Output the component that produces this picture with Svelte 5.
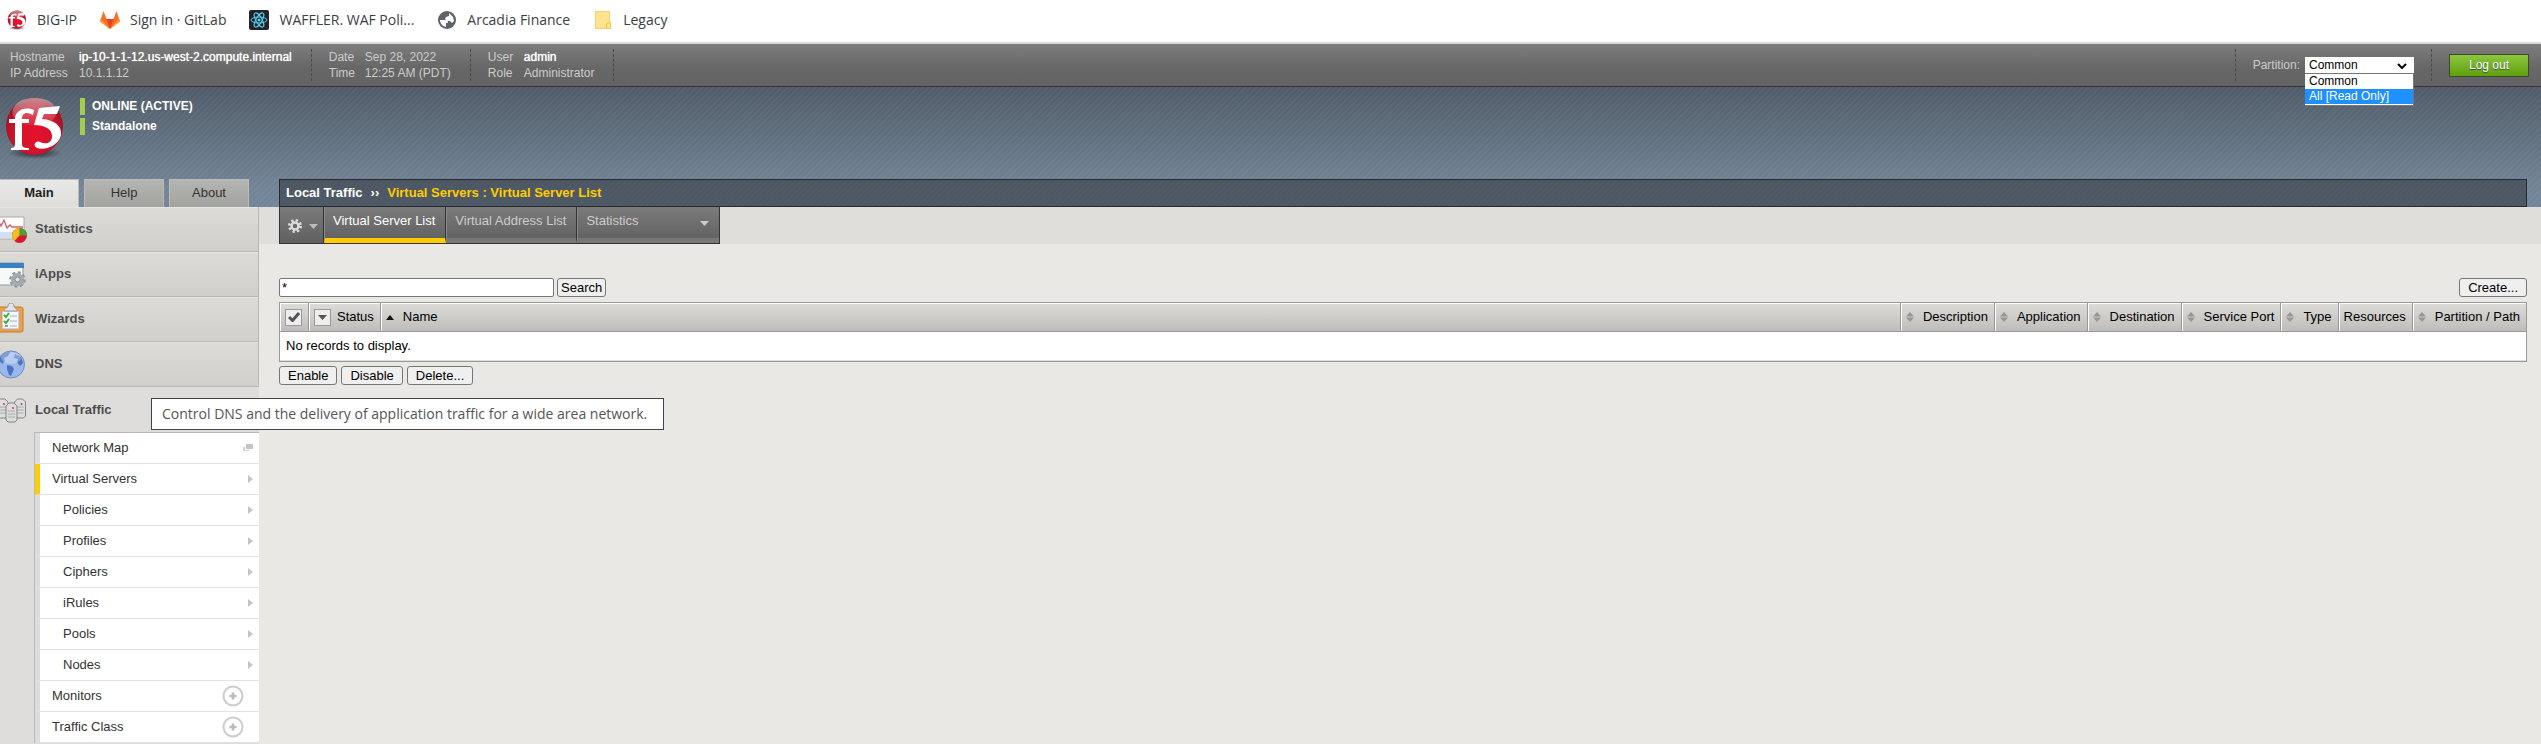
<script lang="ts">
  const menu = ['Statistics', 'iApps', 'Wizards', 'DNS', 'Local Traffic'];
  const links = [
    { label: 'Network Map', icon: 'window' },
    { label: 'Virtual Servers', icon: 'arrow', active: true },
    { label: 'Policies', icon: 'arrow', sub: true },
    { label: 'Profiles', icon: 'arrow', sub: true },
    { label: 'Ciphers', icon: 'arrow', sub: true },
    { label: 'iRules', icon: 'arrow', sub: true },
    { label: 'Pools', icon: 'arrow', sub: true },
    { label: 'Nodes', icon: 'arrow', sub: true },
    { label: 'Monitors', icon: 'plus' },
    { label: 'Traffic Class', icon: 'plus' }
  ];
  const columns = ['Description', 'Application', 'Destination', 'Service Port', 'Type', 'Resources', 'Partition / Path'];
  const options = ['Common', 'All [Read Only]'];
  let partition = $state('Common');
  let query = $state('*');
</script>

{#snippet ball(size: number, id: string)}
  <svg width={size} height={size} viewBox="0 0 62 62" aria-hidden="true">
    <defs>
      <radialGradient id={id} cx="50%" cy="60%" r="60%">
        <stop offset="0" stop-color="#e8102c" />
        <stop offset="0.6" stop-color="#d0142c" />
        <stop offset="1" stop-color="#8e1420" />
      </radialGradient>
      <radialGradient id={id + 'e'}>
        <stop offset="0" stop-color="#14181c" stop-opacity=".8" />
        <stop offset="1" stop-color="#14181c" stop-opacity="0" />
      </radialGradient>
      <linearGradient id={id + 's'} x1="0" y1="0" x2="0" y2="1">
        <stop offset="0" stop-color="#fff" stop-opacity=".5" />
        <stop offset="1" stop-color="#fff" stop-opacity="0.05" />
      </linearGradient>
    </defs>
    <ellipse cx="31" cy="56" rx="27" ry="6" fill="url(#{id + 'e'})" />
    <circle cx="30.500" cy="29.500" r="28.500" fill="url(#{id})" />
    <ellipse cx="30.500" cy="15" rx="22" ry="14" fill="url(#{id + 's'})" />
    <path d="M30 13c-10-4-19 1-19 9H5v4h6v20c0 4-1 5-4 5v2h18v-2c-6 0-7-1-7-5V26h7v-4h-7c0-6 4-8 11-4z" fill="#fff" />
    <path d="M35 11l21-2-3 8H40l-2 5c13 1 20 7 19 16-2 10-15 16-24 13-5-3-1-8 3-6 6 3 12 1 12-6 0-7-7-11-18-11z" fill="#fff" />
  </svg>
{/snippet}

<div class="page">
  <nav class="bookmarks" aria-label="Bookmarks">
    <a href="#bigip">{@render ball(20, 'b1')}BIG-IP</a>
    <a href="#gitlab">
      <svg width="20" height="20" viewBox="0 0 20 20" aria-hidden="true">
        <path d="M10 19L0 11.500 3.500 1l3 8h7l3-8L20 11.500z" fill="#fc6d26" />
        <path d="M10 19L6.500 9h7z" fill="#e24329" />
        <path d="M0 11.500L1 9l9 10zM20 11.500L19 9l-9 10z" fill="#fca326" />
      </svg>Sign in · GitLab</a>
    <a href="#waffler">
      <svg width="20" height="20" viewBox="0 0 20 20" aria-hidden="true">
        <rect width="20" height="20" rx="2" fill="#20232a" />
        <g fill="none" stroke="#5ccfee" stroke-width="1">
          <ellipse cx="10" cy="10" rx="8" ry="3" />
          <ellipse cx="10" cy="10" rx="8" ry="3" transform="rotate(60 10 10)" />
          <ellipse cx="10" cy="10" rx="8" ry="3" transform="rotate(120 10 10)" />
        </g>
        <circle cx="10" cy="10" r="1.500" fill="#5ccfee" />
      </svg>WAFFLER. WAF Poli...</a>
    <a href="#arcadia">
      <svg width="20" height="20" viewBox="0 0 20 20" aria-hidden="true">
        <circle cx="10" cy="10" r="9" fill="#5f6368" />
        <path d="M3 10l5 0c2 0 3 1 3 3h-2v4c-4-1-6-4-6-7zM12 3l4 4 1 4-2 2-2-2h-3l-2-2 1-2 3-1z" fill="#fff" />
      </svg>Arcadia Finance</a>
    <a href="#legacy">
      <svg width="20" height="20" viewBox="0 0 20 20" aria-hidden="true">
        <path d="M2.500 1.500h14v17h-14z" fill="#ffe38f" stroke="#f5d169" />
        <path d="M13.500 18.500v-5l4-1v6z" fill="#ffe38f" stroke="#efc84e" />
      </svg>Legacy</a>
  </nav>

  <header class="status">
    <dl>
      <div><dt>Hostname</dt><dd class="strong">ip-10-1-1-12.us-west-2.compute.internal</dd></div>
      <div><dt>IP Address</dt><dd>10.1.1.12</dd></div>
    </dl>
    <dl class="narrow">
      <div><dt>Date</dt><dd>Sep 28, 2022</dd></div>
      <div><dt>Time</dt><dd>12:25 AM (PDT)</dd></div>
    </dl>
    <dl class="narrow">
      <div><dt>User</dt><dd class="strong">admin</dd></div>
      <div><dt>Role</dt><dd>Administrator</dd></div>
    </dl>
    <div class="partition">
      <label for="partition">Partition:</label>
      <div class="picker">
        <select id="partition" bind:value={partition}>
          {#each options as o}<option>{o}</option>{/each}
        </select>
        <svg class="chev" width="10" height="6" viewBox="0 0 10 6" aria-hidden="true"><path d="M1 1l4 4 4-4" fill="none" stroke="#000" stroke-width="2" /></svg>
        <ul class="options">
          {#each options as o, i}<li class:hot={i === 1}>{o}</li>{/each}
        </ul>
      </div>
    </div>
    <div class="logout"><button>Log out</button></div>
  </header>

  <div class="banner">
    <div class="brand">
      <span class="logo">{@render ball(62, 'b2')}</span>
      <div class="state"><span>ONLINE (ACTIVE)</span><span>Standalone</span></div>
    </div>
    <div class="heads">
      <div class="tabs">
        <button class="on">Main</button><button>Help</button><button>About</button>
      </div>
      <h1><span>Local Traffic</span><span>››</span><em>Virtual Servers : Virtual Server List</em></h1>
    </div>
  </div>

  <div class="body">
    <aside>
      {#each menu as m, i}
        <a class="item" class:open={i === 4} href="#{m}">
          <svg width="28" height="32" viewBox="0 0 28 32" aria-hidden="true">
            {#if i === 0}
              <path d="M-2 4h26v22H-2z" fill="#fdfdfd" stroke="#aaa" />
              <path d="M-1 19h24v6H-1z" fill="#cfe0ee" />
              <path d="M-1 9l2 4 3-6 3 8 3-3 2 2h11" fill="none" stroke="#d4606a" stroke-width="1.300" />
              <circle cx="19.500" cy="22.500" r="7.500" fill="#d8172f" />
              <path d="M19.500 22.500V15a7.500 7.500 0 0 1 7.500 7.500z" fill="#3fa535" />
              <path d="M19.500 22.500V15a7.500 7.500 0 0 0-5 13z" fill="#f4bd1e" />
            {:else if i === 1}
              <path d="M-2 5h25v22H-2z" fill="#f7f8f9" stroke="#8c99a5" />
              <path d="M-2 5h26v5H-2z" fill="#3b82c4" />
              <circle cx="17.500" cy="21.500" r="7" fill="none" stroke="#8f999b" stroke-width="2.500" stroke-dasharray="3 2.500" />
              <circle cx="17.500" cy="21.500" r="4.500" fill="#d3d6d7" stroke="#a3abad" stroke-width="4" />
              <circle cx="17.500" cy="21.500" r="2.500" fill="#dfe1e1" stroke="#848d90" />
            {:else if i === 2}
              <rect x="-3" y="4" width="26" height="25" rx="2" fill="#f0a040" stroke="#c97a20" />
              <path d="M2 8h17v18H2z" fill="#f3f6fc" stroke="#a9a9b5" />
              <path d="M4 8c0-4 4-2 4-5 0-4 6-4 6 0 0 3 3 1 3 5z" fill="#e2e3e5" stroke="#999" />
              <path d="M10 13h7M10 18h7M10 23h7" stroke="#a6b2d4" />
              <path d="M4 12l2 2 3-4M4 18l2 2 3-4" fill="none" stroke="#3fae2a" stroke-width="2" />
              <path d="M5 23h3" stroke="#999" stroke-width="2" />
            {:else if i === 3}
              <circle cx="11" cy="16.500" r="13.500" fill="#9ab8ee" stroke="#6e8cc0" />
              <path d="M-1 12c2-5 6-8 11-8l-2 4-4 2 1 3-3 3zM7 17l5 1 2 3-3 7-2-1-2-6zM15 6l6 3 2 6-3 3-3-4 1-3-4-1z" fill="#4a74bc" />
              <ellipse cx="11" cy="10" rx="10" ry="6" fill="#fff" opacity=".3" />
            {:else}
              {#each [[-3, 5], [14.500, 5], [6, 9]] as [x, y]}
                <path d="M{x} {y + 3}l3-3h5l3 3v14l-2 2h-7l-2-2z" fill="#dcdddd" stroke="#858585" />
                <path d="M{x + 2} {y + 8}h7M{x + 2} {y + 11}h7M{x + 2} {y + 14}h7" stroke="#aaa" />
                <circle cx={x + 7} cy={y + 5} r="1" fill="#e0344a" />
              {/each}
            {/if}
          </svg>{m}</a>
      {/each}
      <ul class="links">
        {#each links as l}
          <li class:active={l.active} class:sub={l.sub}>
            <a href="#{l.label}">{l.label}</a>
            {#if l.icon === 'arrow'}
              <svg width="5" height="10" viewBox="0 0 5 10" aria-hidden="true"><path d="M0 1l5 4-5 4z" fill="#c4c4c4" /></svg>
            {:else if l.icon === 'window'}
              <svg width="10" height="8" viewBox="0 0 10 8" aria-hidden="true"><path d="M0 3h2v3h4v1H0z" fill="#d0d0d0" /><path d="M3 0h7v5H3z" fill="#c4c4c4" /></svg>
            {:else}
              <button class="add" aria-label="Create {l.label}">
                <svg width="22" height="22" viewBox="0 0 22 22" aria-hidden="true"><circle cx="11" cy="11" r="9.500" fill="none" stroke="#ccc" stroke-width="2" /><path d="M11 7.500v7M7.500 11h7" stroke="#bbb" stroke-width="2.500" /></svg>
              </button>
            {/if}
          </li>
        {/each}
      </ul>
      <div class="tooltip" role="tooltip">Control DNS and the delivery of application traffic for a wide area network.</div>
    </aside>

    <main>
      <div class="toolbar">
        <div class="tools">
          <button class="gear" aria-label="Preferences">
            <svg width="14" height="14" viewBox="0 0 14 14" aria-hidden="true"><circle cx="7" cy="7" r="5.500" fill="none" stroke="#ddd" stroke-width="3" stroke-dasharray="2.200 2.120" /><circle cx="7" cy="7" r="3.500" fill="none" stroke="#ddd" stroke-width="2.500" /></svg>
            <svg width="9" height="5" viewBox="0 0 9 5" aria-hidden="true"><path d="M0 0h9L4.500 5z" fill="#bbb" /></svg>
          </button>
          <button class="current">Virtual Server List</button>
          <button>Virtual Address List</button>
          <button class="stats">Statistics<svg width="9" height="5" viewBox="0 0 9 5" aria-hidden="true"><path d="M0 0h9L4.500 5z" fill="#ccc" /></svg></button>
        </div>
      </div>

      <div class="content">
        <div class="search">
          <input type="text" aria-label="Search" bind:value={query} />
          <button class="btn tight">Search</button>
          <button class="btn create">Create...</button>
        </div>
        <table>
          <thead>
            <tr>
              <th class="check"><span class="box"><svg width="12" height="10" viewBox="0 0 12 10" aria-hidden="true"><path d="M1 5l3.500 3.500L11 1" fill="none" stroke="#555" stroke-width="3" /></svg></span></th>
              <th class="st"><div><span class="box"><svg width="9" height="5" viewBox="0 0 9 5" aria-hidden="true"><path d="M0 0h9L4.500 5z" fill="#555" /></svg></span>Status</div></th>
              <th class="name"><div><svg width="8" height="5" viewBox="0 0 8 5" aria-hidden="true"><path d="M0 5h8L4 0z" fill="#111" /></svg>Name</div></th>
              {#each columns as c}
                <th class="col"><div>{#if c !== 'Resources'}<svg width="8" height="10" viewBox="0 0 8 10" aria-hidden="true"><path d="M0 4.500h8L4 0zM0 5.500h8L4 10z" fill="#969696" /></svg>{/if}{c}</div></th>
              {/each}
            </tr>
          </thead>
          <tbody><tr><td colspan="10">No records to display.</td></tr></tbody>
        </table>
        <div class="actions">
          <button class="btn">Enable</button><button class="btn">Disable</button><button class="btn">Delete...</button>
        </div>
      </div>
    </main>
  </div>
</div>

<style>
  :global(body) { background: #e9e8e4; overflow: hidden; }
  .page { font: 13px/16px "Liberation Sans", Arial, sans-serif; color: #000; height: 100vh; display: flex; flex-direction: column; overflow: hidden; }
  .page :global(svg) { display: block; flex: none; }
  button, input, select { font: inherit; }
  button { cursor: pointer; }
  a { color: inherit; text-decoration: none; }
  ul, dl, dd, h1 { margin: 0; padding: 0; list-style: none; }

  .bookmarks { display: flex; gap: 23px; height: 40px; flex: none; align-items: center; padding: 0 7px 2px; background: #fff; border-bottom: 2px solid #d9dadc; font: 14px/20px "Open Sans", "Noto Sans", sans-serif; color: #3c4043; }
  .bookmarks a { display: flex; gap: 10px; align-items: center; }

  .status { display: flex; height: 42px; flex: none; background: linear-gradient(#7d7d7d, #666 60%, #646464); border-bottom: 1px solid #333; font-size: 12px; color: #ccc; align-items: center; }
  .status dl { display: flex; flex-direction: column; height: 32px; padding: 0 19px 0 10px; border-right: 1px dashed #484848; }
  .status dl div { display: flex; line-height: 16px; }
  .status dt { width: 69px; }
  .status dl.narrow { padding-left: 17px; }
  .status .narrow dt { width: 36px; }
  .strong { color: #fff; text-shadow: 0 0 1px #fff; }
  .partition { display: flex; align-items: center; gap: 5px; margin-left: auto; padding: 0 17px; height: 32px; border: dashed #484848; border-width: 0 1px; }
  .picker { position: relative; }
  select { display: block; width: 109px; height: 17px; border: 0; border-radius: 0; background: #fff; color: #000; padding: 0 4px; appearance: none; line-height: 16px; }
  .chev { position: absolute; right: 7px; top: 6px; }
  .options { position: absolute; top: 16px; left: 0; right: 0; z-index: 5; background: #fff; color: #000; border: 1px solid #767676; border-left: 0; padding-bottom: 1px; }
  .options li { line-height: 15px; padding: 0 4px; }
  .options .hot { background: #1e90ff; color: #fff; }
  .logout { padding: 0 12px 0 17px; }
  .logout button { width: 80px; height: 23px; border: 1px solid #3d4a2c; background: linear-gradient(#8cc63e, #5fa00c); color: #fff; padding: 0; font-size: 12px; text-shadow: 0 1px 1px #345; }

  .banner { height: 120px; flex: none; display: flex; flex-direction: column; justify-content: space-between; background: repeating-linear-gradient(135deg, rgba(255,255,255,.04) 0 2px, transparent 2px 4px), linear-gradient(#4f5b68, #728496 85%, #72849a); }
  .brand { display: flex; padding: 10px 0 0 4px; gap: 14px; }
  .state { display: flex; flex-direction: column; gap: 3px; font: bold 12px/17px "Liberation Sans", Arial, sans-serif; color: #fff; padding-top: 1px; }
  .state span { border-left: 5px solid #a2cd52; padding-left: 7px; }
  .heads { display: flex; align-items: flex-end; }
  .tabs { display: flex; gap: 5px; width: 279px; flex: none; }
  .tabs button { width: 80px; height: 28px; border: 1px solid #bbb; border-bottom: 0; background: linear-gradient(#b4b4b2, #a2a29e); padding: 0 0 2px; color: #333; }
  .tabs .on { width: 79px; border-left: 0; background: linear-gradient(#e8e8e8, #deddd9); font-weight: bold; color: #222; }
  h1 { flex: 1; display: flex; gap: 8px; margin-right: 14px; height: 26px; border: 1px solid #26292d; background: rgba(40, 44, 50, .5); padding-left: 6px; font-size: 13px; line-height: 26px; color: #fff; }
  h1 em { font-style: normal; color: #fc0; }

  .body { display: flex; flex: 1; min-height: 0; }
  aside { position: relative; width: 259px; flex: none; background: #dedddb; }
  .item { display: flex; align-items: center; gap: 7px; height: 44px; border-bottom: 1px solid #b9b9b7; border-right: 1px solid #b9b9b7; background: linear-gradient(#dcdbd8, #d0cfcc); box-shadow: inset 0 1px #e5e4e1; color: #4d4d4d; font-weight: bold; }
  .item.open { border: 0; background: none; box-shadow: none; height: 45px; }
  .links { margin-left: 34px; border: solid #b9b9b9; border-width: 1px 0 0 1px; background: #fff; }
  li { box-sizing: border-box; }
  .links li { display: flex; justify-content: space-between; align-items: center; height: 31px; border-left: 5px solid #dcdcdc; border-bottom: 1px solid #e2e2e2; padding: 0 6px 0 12px; color: #333; }
  .links .sub { padding-left: 23px; }
  .links .active { border-left-color: #fc0; }
  .add { border: 0; padding: 0; background: none; margin-right: 9px; }
  .tooltip { position: absolute; left: 151px; top: 191px; z-index: 9; box-sizing: border-box; height: 32px; padding: 0 16px 0 10px; border: 1px solid #444; background: #fff; color: #555; font: 14px/30px "Open Sans", "Noto Sans", sans-serif; white-space: nowrap; }

  main { flex: 1; min-width: 0; }
  .toolbar { padding-left: 20px; background: #dfdedb; }
  .tools { display: flex; width: max-content; height: 37px; background: linear-gradient(#7b7b7b, #5f5f5f); box-sizing: border-box; border: 1px solid #333; border-top: 0; }
  .tools button { display: flex; box-sizing: border-box; border: 0; border-left: 1px solid #8a8a8a; border-right: 1px solid #333; border-bottom: 5px solid #777; background: none; color: #ccc; padding: 6px 10px 0 8px; line-height: 16px; }
  .tools .gear { align-items: center; gap: 7px; padding: 2px 5px 0 8px; border-left: 0; border-bottom: 0; }
  .tools .current { color: #fff; border-bottom-color: #fc0; }
  .tools .stats { width: 142px; justify-content: space-between; border-right: 0; }
  .stats svg { margin-top: 8px; }
  .content { padding: 34px 14px 0 20px; }
  .search { display: flex; gap: 3px; margin-bottom: 5px; }
  .search input { box-sizing: border-box; width: 275px; height: 19px; border: 1px solid #767676; border-radius: 2px; padding: 0 2px; }
  .btn { box-sizing: border-box; height: 19px; border: 1px solid #767676; border-radius: 3px; background: #efefef; color: #000; padding: 0 8px; line-height: 16px; }
  .tight { padding: 0 3px; }
  .create { margin-left: auto; }
  table { width: 100%; border-collapse: separate; border-spacing: 0; border: 1px solid #999; background: #fff; }
  th { height: 29px; box-sizing: border-box; padding: 0 6px 0 5px; font-weight: normal; text-align: left; white-space: nowrap; border-right: 1px solid #999; border-bottom: 1px solid #999; background: linear-gradient(#dddcd9, #bebdba); box-shadow: inset 1px 1px #fff; }
  th:last-child { border-right: 0; }
  th div { display: flex; align-items: center; gap: 6px; }
  th.col div, th.name div { gap: 9px; }
  .name { width: 100%; }
  .box { display: flex; width: 15px; height: 15px; align-items: center; justify-content: center; border: 1px solid #999; background: #eee; }
  td { height: 29px; box-sizing: border-box; padding: 0 6px; border-bottom: 1px solid #ddd; }
  .actions { display: flex; gap: 4px; margin-top: 4px; }
</style>
